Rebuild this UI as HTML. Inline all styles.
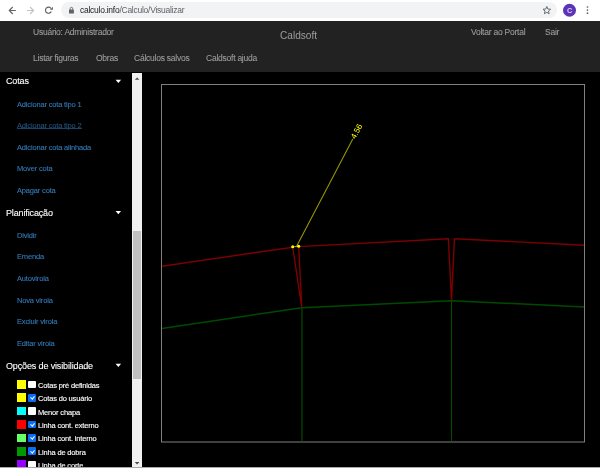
<!DOCTYPE html>
<html><head><meta charset="utf-8">
<style>
*{margin:0;padding:0;box-sizing:border-box}
html,body{width:600px;height:468px;overflow:hidden;background:#000;font-family:"Liberation Sans",sans-serif}
.a{position:absolute;white-space:nowrap;line-height:1;will-change:transform}
#chrome{position:absolute;left:0;top:0;width:600px;height:21px;background:#fff}
#omni{position:absolute;left:61px;top:2px;width:496px;height:16px;border-radius:8px;background:#f1f3f4}
#hdr{position:absolute;left:0;top:21px;width:600px;height:51px;background:#222}
.nv{font-size:8.5px;letter-spacing:-0.24px;color:#9d9d9d;-webkit-text-stroke:0.08px #9d9d9d}
.sh{font-size:9px;letter-spacing:-0.14px;color:#fff;-webkit-text-stroke:0.1px #fff}
.lk{font-size:7.5px;letter-spacing:-0.17px;color:#337ab7;left:16.7px;-webkit-text-stroke:0.1px currentColor}
.tri{position:absolute;width:0;height:0;border-left:2.7px solid transparent;border-right:2.7px solid transparent;border-top:3.2px solid #fff}
.sq{position:absolute;left:17px;width:8.5px;height:8.7px}
.cb{position:absolute;left:28px;width:7.8px;height:7.8px;border-radius:1px;background:#fff}
.cb.on{background:#0b6cf5}
.cb.on::after{content:"";position:absolute;left:2.7px;top:1.3px;width:1.5px;height:3.3px;border:solid #fff;border-width:0 1.2px 1.2px 0;transform:rotate(40deg)}
.lb{font-size:7.5px;letter-spacing:-0.17px;color:#fff;left:37.6px;-webkit-text-stroke:0.12px #fff}
</style></head><body>
<div id="chrome">
  <div id="omni"></div>
  <svg style="position:absolute;left:0;top:0" width="600" height="21">
    <path d="M15.8,10.5 H9.6 M12.7,7 L9.3,10.5 L12.7,14" fill="none" stroke="#5f6368" stroke-width="1.15"/>
    <path d="M27,10.5 H33.2 M30.1,7 L33.5,10.5 L30.1,14" fill="none" stroke="#c0c3c7" stroke-width="1.15"/>
    <path d="M50.9,8.3 A3.05,3.05 0 1 0 51.3,11.5" fill="none" stroke="#5f6368" stroke-width="1.15"/>
    <path d="M49.9,9.7 L52.9,9.7 L52.9,6.7 Z" fill="#5f6368"/>
    <path d="M70.2,9.8 V8.6 A1.25,1.25 0 0 1 72.7,8.6 V9.8" fill="none" stroke="#5f6368" stroke-width="0.9"/>
    <rect x="69" y="9.6" width="4.9" height="4.0" rx="0.5" fill="#5f6368"/>
    <path d="M546.80,6.50 L547.86,9.04 L550.60,9.26 L548.51,11.06 L549.15,13.74 L546.80,12.30 L544.45,13.74 L545.09,11.06 L543.00,9.26 L545.74,9.04 Z" fill="none" stroke="#5f6368" stroke-width="0.95" stroke-linejoin="miter"/>
    <circle cx="569.5" cy="10.25" r="6.5" fill="#5b35b5"/>
    <circle cx="587.5" cy="7" r="0.85" fill="#5f6368"/>
    <circle cx="587.5" cy="10.1" r="0.85" fill="#5f6368"/>
    <circle cx="587.5" cy="13.2" r="0.85" fill="#5f6368"/>
  </svg>
  <div class="a" style="left:566.8px;top:7.1px;font-size:7.3px;font-weight:bold;color:#d8d0f2">C</div>
  <div class="a" style="left:80.3px;top:6.1px;font-size:8.5px;letter-spacing:-0.26px;color:#5f6368"><span style="color:#202124">calculo.info</span>/Calculo/Visualizar</div>
</div>
<div id="hdr"></div>
<!-- header text -->
<div class="a nv" style="left:33px;top:28.2px">Usuário: Administrador</div>
<div class="a nv" style="left:33px;top:53.9px">Listar figuras</div>
<div class="a nv" style="left:95.6px;top:53.9px">Obras</div>
<div class="a nv" style="left:134.2px;top:53.9px">Cálculos salvos</div>
<div class="a nv" style="left:206.1px;top:53.9px">Caldsoft ajuda</div>
<div class="a nv" style="left:471px;top:28.4px">Voltar ao Portal</div>
<div class="a nv" style="left:544.7px;top:28.4px">Sair</div>
<div class="a" style="left:280px;top:31px;font-size:10.1px;color:#9d9d9d">Caldsoft</div>

<!-- sidebar -->
<div class="a sh" style="left:6px;top:77.3px">Cotas</div>
<svg style="position:absolute;left:0;top:0" width="130" height="85"><path d="M115.6,79.80 L121.1,79.80 L118.35,83.10 Z" fill="#fff"/></svg>
<div class="a lk" style="top:100.5px">Adicionar cota tipo 1</div>
<div class="a lk" style="top:122.4px;color:#23527c">Adicionar cota tipo 2</div><div style="position:absolute;left:16.7px;top:128.2px;width:65px;height:1px;background:#1b4266"></div>
<div class="a lk" style="top:143.6px">Adicionar cota alinhada</div>
<div class="a lk" style="top:165.0px">Mover cota</div>
<div class="a lk" style="top:186.5px">Apagar cota</div>
<div class="a sh" style="left:5.8px;top:208.5px">Planificação</div>
<svg style="position:absolute;left:0;top:0" width="130" height="217"><path d="M115.6,211.00 L121.1,211.00 L118.35,214.30 Z" fill="#fff"/></svg>
<div class="a lk" style="top:231.8px">Dividir</div>
<div class="a lk" style="top:253.1px">Emenda</div>
<div class="a lk" style="top:274.8px">Autovirola</div>
<div class="a lk" style="top:296.6px">Nova virola</div>
<div class="a lk" style="top:317.8px">Excluir virola</div>
<div class="a lk" style="top:339.5px">Editar virola</div>
<div class="a sh" style="left:5.85px;top:362.0px">Opções de visibilidade</div>
<svg style="position:absolute;left:0;top:0" width="130" height="369"><path d="M115.6,363.80 L121.1,363.80 L118.35,367.10 Z" fill="#fff"/></svg>

<div class="sq" style="top:380px;background:#ff0"></div><div class="cb" style="top:380.6px"></div><div class="a lb" style="top:382.0px">Cotas pré definidas</div>
<div class="sq" style="top:393.4px;background:#ff0"></div><div class="cb on" style="top:393.9px"></div><div class="a lb" style="top:395.3px">Cotas do usuário</div>
<div class="sq" style="top:406.8px;background:#0ff"></div><div class="cb" style="top:407.3px"></div><div class="a lb" style="top:408.6px">Menor chapa</div>
<div class="sq" style="top:420.1px;background:#f00"></div><div class="cb on" style="top:420.6px"></div><div class="a lb" style="top:421.9px">Linha cont. externo</div>
<div class="sq" style="top:433.5px;background:#6f6"></div><div class="cb on" style="top:434px"></div><div class="a lb" style="top:435.2px">Linha cont. interno</div>
<div class="sq" style="top:446.9px;background:#090"></div><div class="cb on" style="top:447.4px"></div><div class="a lb" style="top:448.5px">Linha de dobra</div>
<div class="sq" style="top:460.2px;background:#90f"></div><div class="cb" style="top:460.7px"></div><div class="a lb" style="top:461.8px">Linha de corte</div>

<!-- scrollbar -->
<div style="position:absolute;left:132px;top:73px;width:10px;height:395px;background:#f1f1f1"></div>
<div style="position:absolute;left:132.6px;top:231px;width:8.8px;height:148px;background:#c1c1c1"></div>

<svg style="position:absolute;left:132px;top:73px" width="10" height="395">
  <path d="M2.8,6.8 L7.4,6.8 L5.1,4.4 Z" fill="#4a4a4a"/>
  <path d="M2.8,389.1 L7.4,389.1 L5.1,391.5 Z" fill="#4a4a4a"/>
</svg>
<!-- canvas -->
<svg style="position:absolute;left:0;top:0" width="600" height="468">
  <rect x="161.5" y="84.5" width="423" height="357.5" fill="none" stroke="#808080" stroke-width="1"/>
  <path d="M162,328.5 L301.8,307.7 L451.5,300.7 L584,306.9" fill="none" stroke="#004a00" stroke-width="1.5"/>
  <path d="M302,307.5 V441.5" fill="none" stroke="#005a00" stroke-width="1"/><path d="M451.5,300.7 V441.5" fill="none" stroke="#005000" stroke-width="1"/>
  <path d="M162,266.2 L292.7,247.2 L301.8,307.5 L298.7,246.6 L448.4,238.7 L451.5,300.7 L454.4,238.7 L584,245.2" fill="none" stroke="#7e0000" stroke-width="1.4"/>
  <path d="M292.7,246.7 L298.7,246.4 M296.6,246.2 L352.8,139" fill="none" stroke="#959500" stroke-width="1.1"/>
  <circle cx="292.7" cy="246.7" r="1.5" fill="#ff0"/>
  <circle cx="298.7" cy="246.3" r="1.5" fill="#ff0"/>
  <text x="0" y="0" font-family="Liberation Sans" font-size="8" fill="#ff0" transform="translate(355.2,139.6) rotate(-61.7)">4.56</text>
</svg>
<div style="position:absolute;left:0;top:467px;width:600px;height:1px;background:#a8a8a8"></div>
</body></html>
